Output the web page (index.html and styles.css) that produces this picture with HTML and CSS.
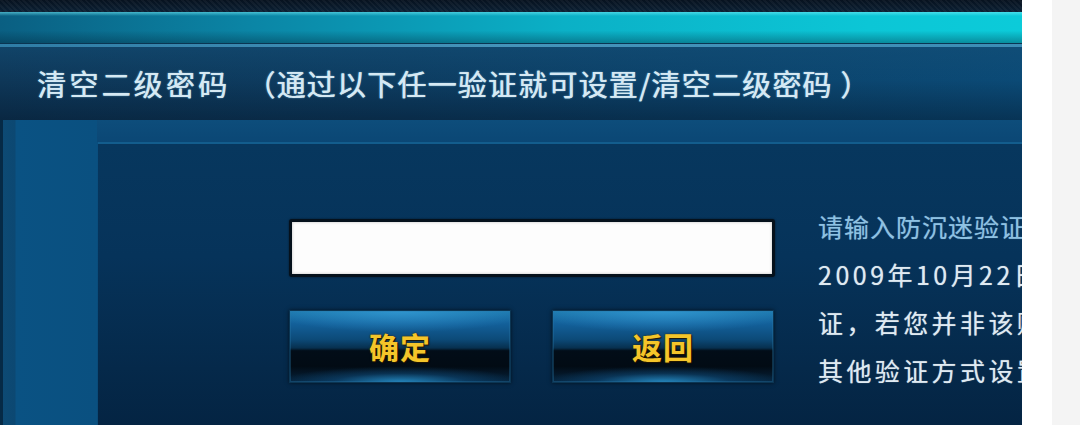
FILE: index.html
```html
<!DOCTYPE html>
<html lang="zh-CN">
<head>
<meta charset="utf-8">
<title>清空二级密码</title>
<link rel="stylesheet" href="styles.css">
</head>
<body>
<div class="page">
  <div class="game">
    <div class="top-strip"></div>
    <div class="cyan-bar"></div>
    <div class="rule"></div>
    <div class="title-bar">
      <span class="t1">清空二级密码</span><span class="t2">（通过以下任一验证就可设置/清空二级密码 ）</span>
    </div>
    <div class="body">
      <div class="panel">
        <div class="form">
          <div class="field"></div>
          <div class="buttons">
            <div class="btn">确定</div>
            <div class="btn">返回</div>
          </div>
        </div>
        <div class="info">
          <div class="line hint">请输入防沉迷验证时填写的身份证号码</div>
          <div class="line"><span class="num">2009</span>年<span class="num">10</span>月<span class="num">22</span>日前注册的账号可通过防沉迷验</div>
          <div class="line">证，若您并非该账号的防沉迷登记人，请选择</div>
          <div class="line">其他验证方式设置/清空二级密码</div>
        </div>
      </div>
    </div>
  </div>
  <div class="white-gap"></div>
  <div class="gray-edge"></div>
</div>
</body>
</html>
```

FILE: styles.css
```css
html, body {
  margin: 0;
  padding: 0;
}
body {
  width: 1080px;
  height: 425px;
  overflow: hidden;
  background: #f4f4f4;
  font-family: "Noto Sans CJK SC", "Noto Sans", sans-serif;
}
.page {
  display: flex;
  height: 425px;
}
.game {
  width: 1022px;
  height: 425px;
  overflow: hidden;
  display: flex;
  flex-direction: column;
  background: #083458;
}
.white-gap {
  width: 30px;
  background: #ffffff;
}
.gray-edge {
  flex: 1;
  background: #f4f4f4;
}

.top-strip {
  height: 12px;
  background:
    repeating-linear-gradient(45deg, rgba(255,255,255,0.04) 0 2px, rgba(0,0,0,0) 2px 4px),
    linear-gradient(to bottom, #07121f, #0b2034);
}
.cyan-bar {
  height: 31px;
  background:
    linear-gradient(to bottom, rgba(120,240,250,0.55) 0, rgba(120,240,250,0.0) 4px, rgba(0,0,0,0) 60%, rgba(0,30,50,0.35) 100%),
    linear-gradient(to right, #0a5f82 0%, #0b86a6 25%, #0bb0c6 55%, #0cc6d6 85%, #0ccbd9 100%);
}
.rule {
  height: 3px;
  background: linear-gradient(to right, #2f7da6, #4594ba 50%, #3c8db5);
  border-top: 1px solid #0a3552;
}
.title-bar {
  height: 73px;
  display: flex;
  align-items: center;
  padding-left: 37px;
  padding-bottom: 2px;
  box-sizing: border-box;
  background:
    linear-gradient(to bottom, rgba(20,80,120,0.5) 0%, rgba(0,0,0,0) 45%, rgba(0,10,25,0.35) 100%),
    linear-gradient(to right, #0e3758 0%, #0d3d62 40%, #0b4a76 100%);
  color: #d6e9f3;
  font-size: 29px;
  white-space: nowrap;
  text-shadow: 0 0 2px rgba(140,200,235,0.7), 0.5px 0 0 #d6e9f3;
}
.t1 {
  letter-spacing: 3.2px;
}
.t2 {
  margin-left: 16px;
  letter-spacing: 1.2px;
}

.body {
  flex: 1;
  display: flex;
  padding: 22px 0 0 98px;
  background:
    linear-gradient(to right, #062a46 0, #062a46 3px, #0d4a74 3px, #0c4872 15px, #0a5283 16px, #0a5080 97px, rgba(0,0,0,0) 97px),
    linear-gradient(to bottom, #0d4d7b 0, #0b4775 22px, #0a4e7e 22px, #0a4a78 100%);
}
.panel {
  flex: 1;
  display: flex;
  align-items: flex-start;
  overflow: hidden;
  border-top: 2px solid #135d8d;
  background: linear-gradient(to bottom, #07375e 0%, #06335a 40%, #05294a 80%, #042443 100%);
}
.form {
  display: flex;
  flex-direction: column;
  gap: 33px;
  width: 486px;
  margin-left: 191px;
  margin-top: 75px;
  flex-shrink: 0;
}
.field {
  height: 58px;
  box-sizing: border-box;
  border: 3px solid #05111c;
  border-radius: 3px;
  background: #fdfdfd;
  box-shadow: inset 0 0 3px rgba(0,0,0,0.25), 0 0 2px rgba(0,0,0,0.6);
}
.buttons {
  display: flex;
  gap: 41px;
}
.btn {
  width: 222px;
  height: 73px;
  box-sizing: border-box;
  display: flex;
  align-items: center;
  justify-content: center;
  padding-bottom: 2px;
  border: 1px solid #0b3553;
  background:
    radial-gradient(ellipse 55% 22% at 50% 100%, rgba(40,150,210,0.85) 0%, rgba(20,100,160,0.35) 55%, rgba(0,0,0,0) 100%),
    radial-gradient(ellipse 60% 30% at 50% 0%, rgba(60,170,230,0.6) 0%, rgba(0,0,0,0) 100%),
    linear-gradient(to bottom, #1d78ad 0%, #13609a 18%, #0c4a78 40%, #07304f 52%, #020d18 56%, #020b14 78%, #06243e 100%);
  box-shadow: 0 0 4px rgba(0,0,0,0.6), inset 0 0 0 1px rgba(40,120,170,0.35);
  color: #f4c52a;
  font-size: 30px;
  font-weight: 700;
  letter-spacing: 1px;
  text-shadow: 0 0 2px #3a2600, 1px 1px 1px #1a1000;
}
.info {
  margin-left: 43px;
  margin-top: 58px;
  white-space: nowrap;
  font-size: 25px;
  line-height: 48px;
  letter-spacing: 3.4px;
  color: #dfeaf2;
  text-shadow: 0 0 1px rgba(255,255,255,0.6);
}
.num {
  letter-spacing: 3.5px;
}
.hint {
  letter-spacing: 1px;
  color: #8ec1e2;
  text-shadow: 0 0 1px rgba(140,195,230,0.6);
}
```
